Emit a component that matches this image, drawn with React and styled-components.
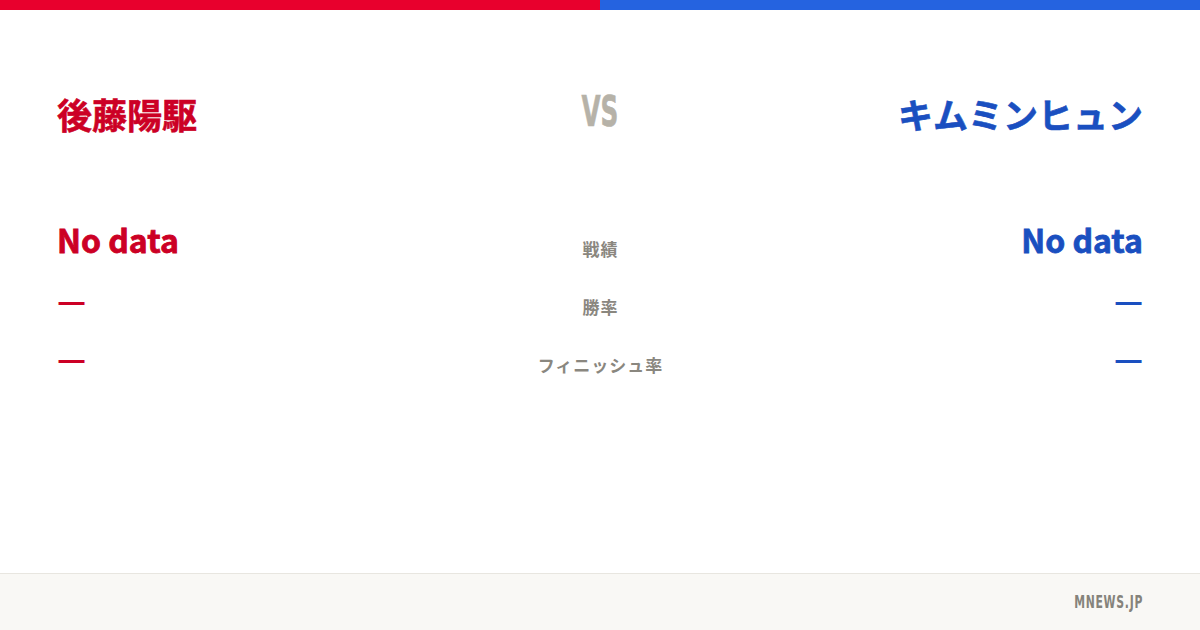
import styled, { createGlobalStyle } from 'styled-components';

const GlobalStyle = createGlobalStyle`
  html, body {
    margin: 0;
    padding: 0;
    background: #ffffff;
  }
  body {
    font-family: "Noto Sans CJK JP", "Noto Sans", sans-serif;
  }
`

const RED = '#cc0025'
const BLUE = '#1a4fc0'

const stats = [
  { label: '戦績', left: 'No data', right: 'No data', big: true },
  { label: '勝率', left: '—', right: '—' },
  { label: 'フィニッシュ率', left: '—', right: '—' },
]

export default function App() {
  return (
    <Page>
      <GlobalStyle />
      <TopBar>
        <BarHalf color="#e8002d" />
        <BarHalf color="#2563e0" />
      </TopBar>

      <Main>
        <Header>
          <Name side="left">後藤陽駆</Name>
          <Vs>VS</Vs>
          <Name side="right">キムミンヒュン</Name>
        </Header>

        <Stats>
          {stats.map((s) => (
            <StatRow key={s.label}>
              <Value side="left" big={s.big}>{s.left}</Value>
              <Label>{s.label}</Label>
              <Value side="right" big={s.big}>{s.right}</Value>
            </StatRow>
          ))}
        </Stats>
      </Main>

      <Footer>
        <Brand>MNEWS.JP</Brand>
      </Footer>
    </Page>
  )
}

const Page = styled.div`
  width: 1200px;
  height: 630px;
  display: flex;
  flex-direction: column;
  overflow: hidden;
  background: #fff;
`
const TopBar = styled.div`
  display: flex;
  height: 10px;
  flex-shrink: 0;
`
const BarHalf = styled.div`
  flex: 1;
  background: ${(props) => props.color};
`
const Main = styled.div`
  flex: 1;
  display: flex;
  flex-direction: column;
  padding: 0 57px;
`
const Header = styled.div`
  display: grid;
  grid-template-columns: 1fr auto 1fr;
  align-items: center;
  height: 52px;
  margin-top: 77px;
`
const Name = styled.div`
  font-family: "Noto Sans CJK JP", sans-serif;
  font-weight: 700;
  font-size: 35px;
  line-height: 1;
  color: ${(props) => (props.side === 'left' ? RED : BLUE)};
  -webkit-text-stroke: 0.6px ${(props) => (props.side === 'left' ? RED : BLUE)};
  text-align: ${(props) => props.side};
`
const Vs = styled.div`
  font-family: "Liberation Sans Narrow", "DejaVu Sans Condensed", sans-serif;
  font-weight: 700;
  font-size: 43px;
  line-height: 1;
  color: #b6b2a8;
  transform: scaleX(0.64);
  -webkit-text-stroke: 0.6px #b6b2a8;
  margin-top: -4px;
`
const Stats = styled.div`
  display: flex;
  flex-direction: column;
  margin-top: 80px;
`
const StatRow = styled.div`
  display: grid;
  grid-template-columns: 1fr auto 1fr;
  align-items: center;
  height: 58px;
`
const Value = styled.div`
  font-family: "Noto Sans CJK JP", sans-serif;
  font-weight: 700;
  font-size: 32px;
  line-height: 1;
  color: ${(props) => (props.side === 'left' ? RED : BLUE)};
  -webkit-text-stroke: ${(props) => (props.big ? '0.8px' : '0')} ${(props) => (props.side === 'left' ? RED : BLUE)};
  text-align: ${(props) => props.side};
  margin-bottom: ${(props) => (props.big ? '18px' : '14px')};
`
const Label = styled.div`
  font-family: "Noto Sans CJK JP", sans-serif;
  font-weight: 700;
  font-size: 17px;
  letter-spacing: 1px;
  margin-right: -1px;
  line-height: 1;
  color: #8a877f;
  text-align: center;
`
const Footer = styled.div`
  height: 57px;
  flex-shrink: 0;
  display: flex;
  align-items: center;
  justify-content: flex-end;
  padding: 0 57px;
  background: #f9f8f5;
  border-top: 1px solid #e8e6e0;
  box-sizing: border-box;
`
const Brand = styled.div`
  font-family: "Liberation Sans Narrow", "DejaVu Sans Condensed", sans-serif;
  font-weight: 700;
  font-size: 17px;
  letter-spacing: 1px;
  color: #85837b;
  transform: scaleX(0.71);
  transform-origin: right center;
`
